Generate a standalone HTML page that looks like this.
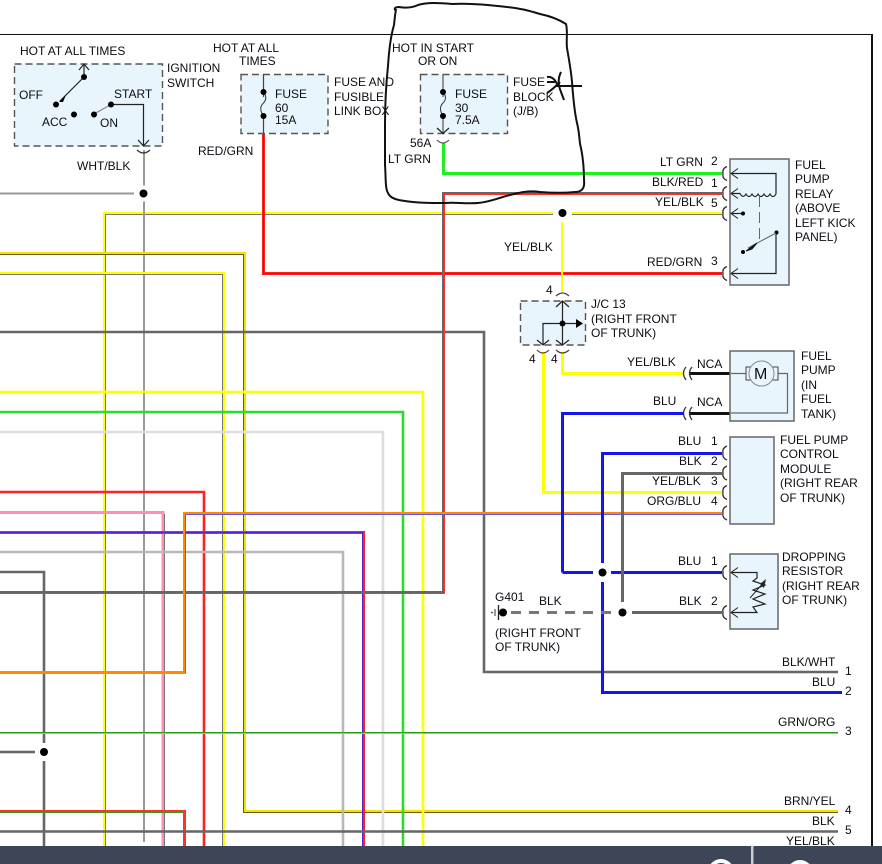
<!DOCTYPE html>
<html><head><meta charset="utf-8"><style>
html,body{margin:0;padding:0;background:#fff;width:882px;height:864px;overflow:hidden}
svg{display:block}
text{font-family:"Liberation Sans",sans-serif;font-size:12px;fill:#0c0c14}
.w{fill:none;stroke-linejoin:miter;shape-rendering:crispEdges}
.w .s{shape-rendering:auto;stroke-width:2.6}
.b{fill:#e9f5fc;stroke:#666;stroke-width:1.5}
.d{fill:#e9f5fc;stroke:#555;stroke-width:1.4;stroke-dasharray:7 4}
.k{fill:none;stroke:#222;stroke-width:1.2}
.g{fill:none;stroke:#666;stroke-width:1.2}
</style></head><body>
<svg width="882" height="864" viewBox="0 0 882 864" xmlns="http://www.w3.org/2000/svg">
<defs>
<path id="c" d="M727,-7Q722,-5 723,0Q722,5 727,7" fill="none" stroke="#333" stroke-width="1.3"/>
<path id="a" d="M738,-5L731,0L738,5" fill="none" stroke="#222" stroke-width="1"/>
</defs>
<rect width="882" height="864" fill="#fff"/>
<path d="M0,34.500H872" fill="none" stroke="#111" stroke-width="1"/>
<path d="M872,34V846" stroke="#111" stroke-width="2"/>

<!-- left wires -->
<g class="w" stroke-width="2">
<path d="M104,846V213H553M572,213H722" stroke="#ff0"/>
<path d="M105.500,846V214.500H553M572,214.500H722" stroke="#777" stroke-width="1"/>
<path d="M144,150V842M0,193.500H134" stroke="#999" stroke-width="2"/>
<path d="M0,253H245V811H838" stroke="#f2e200"/>
<path d="M0,254.500H243.500V812.500H838" stroke="#6f5a12" stroke-width="1"/>
<path d="M0,273H224V846" stroke="#ff0"/>
<path d="M0,274.500H222.500V846" stroke="#777" stroke-width="1"/>
<path d="M263.500,133V273.500H722" stroke="#ff2020" stroke-width="3"/>
<path d="M263.500,133V273.500H722" stroke="#0a7a0a" stroke-width="1"/>
<path class="s" d="M0,332H484V672H838" stroke="#666"/>
<path class="s" d="M0,392H423V846" stroke="#ff0"/>
<path class="s" d="M0,412H403V846" stroke="#2bdc2b"/>
<path class="s" d="M0,432H383V846" stroke="#ddd"/>
<path class="s" d="M0,492H204V846" stroke="#ff2020"/>
<path d="M0,512.500H163V846" stroke="#ff8fb0" stroke-width="3"/>
<path d="M164.500,514V846" stroke="#777" stroke-width="1"/>
<path d="M0,532.500H363.500V846" stroke="#ff2020" stroke-width="3"/>
<path d="M0,532.500H362.500V846" stroke="#5a20d0" stroke-width="1"/>
<path class="s" d="M0,552H343V846" stroke="#b8b8b8"/>
<path class="s" d="M0,572H44V743M44,761V846M0,752H35" stroke="#666"/>
<path d="M0,592H443V193H722" stroke="#666"/>
<path d="M0,593.500H444.500V194.500H722" stroke="#ff3030" stroke-width="1"/>
<path d="M0,672.500H184.500V513.500H722" stroke="#ff8a00" stroke-width="3"/>
<path d="M185.500,673V514.500H722" stroke="#5a5af0" stroke-width="1"/>
<path d="M0,733H838" stroke="#c9c320"/>
<path d="M0,732.500H838" stroke="#2a9a1a" stroke-width="1"/>
<path d="M0,811.500H184.500V846" stroke="#ff3030" stroke-width="3"/>
<path d="M0,812.500H183.500V846" stroke="#3a9a20" stroke-width="1"/>
<path class="s" d="M0,831.500H838" stroke="#666"/>
</g>
<!-- right wires -->
<g class="w" stroke-width="3">
<path d="M443.500,143V173.500H722" stroke="#1fee1f"/>
<path d="M562,222V292" stroke="#ff0" stroke-width="2"/>
<path d="M562.500,352V373.500H684" stroke="#ff0"/>
<path d="M543.500,352V492.500H722" stroke="#ff0"/>
<path d="M542.500,352V494.500" stroke="#ccc" stroke-width="0"/>
<path d="M562.500,572.500V413.500H684" stroke="#1414ee"/>
<path d="M562.500,572.500H593M611,572.500H722" stroke="#1414ee"/>
<path d="M602.500,563V453.500H722" stroke="#1414ee"/>
<path d="M602.500,582V692.500H842" stroke="#1414ee"/>
<path d="M622.500,602V473.500H722" stroke="#666"/>
<path d="M632,612.500H722" stroke="#666"/>
<path d="M511,612.500H613" stroke="#777" stroke-dasharray="10 8"/>
<path d="M690,373.500H730M690,413.500H730" stroke="#111"/>
</g>

<!-- dots with halo -->
<circle cx="143.500" cy="193.500" r="8" fill="#fff"/><circle cx="143.500" cy="193.500" r="4" fill="#000"/>
<circle cx="562.500" cy="213" r="9" fill="#fff"/><circle cx="562.500" cy="213" r="4" fill="#000"/>
<circle cx="602.500" cy="572.500" r="4" fill="#000"/>
<circle cx="622.500" cy="612.500" r="4" fill="#000"/>
<circle cx="44" cy="752" r="4" fill="#000"/>

<!-- ignition switch -->
<rect class="d" x="14.500" y="64" width="148" height="82"/>
<g class="k"><path d="M84,77V64M79,70L84,64L89,70"/><path d="M84,77L60,101"/><path d="M111,104.500H143.500V146M138,140L143.500,146L149,140"/><path d="M94,114L111,104.500" stroke="#888"/></g>
<circle cx="84" cy="77" r="3" fill="#000"/><circle cx="56" cy="104.500" r="3" fill="#000"/><path d="M59,102L66,95L63,102Z" fill="#000"/><circle cx="74" cy="114.500" r="3" fill="#000"/><circle cx="94" cy="114.500" r="3" fill="#000"/><circle cx="111" cy="104.500" r="3" fill="#000"/>
<path d="M137,150Q143.500,156 150,150" fill="none" stroke="#333" stroke-width="1.200"/>

<!-- fuse boxes -->
<rect class="d" x="241" y="74.500" width="87" height="59"/>
<path d="M263.500,74V133" stroke="#444" stroke-width="1.200"/>
<rect x="260" y="97" width="6" height="16" fill="#e9f5fc"/>
<path d="M263.500,92Q268,98 263.500,103Q258,108 263.500,116" fill="none" stroke="#333" stroke-width="1"/>
<circle cx="263.500" cy="92" r="3" fill="#000"/><circle cx="263.500" cy="116" r="3" fill="#000"/>

<rect class="d" x="420.500" y="74.500" width="87" height="59"/>
<path d="M443,74V133" stroke="#555" stroke-width="1.200"/>
<rect x="439" y="97" width="7" height="16" fill="#e9f5fc"/>
<path d="M443,92Q448,98 443,103Q438,108 443,116" fill="none" stroke="#333" stroke-width="1"/>
<circle cx="443" cy="92" r="3" fill="#000"/><circle cx="443" cy="116" r="3" fill="#000"/>
<path d="M437,128L443,133.500L449,128" class="k"/>
<path d="M437,140Q443,146 449,140" fill="none" stroke="#555" stroke-width="1.200"/>

<!-- relay -->
<rect class="b" x="730" y="159" width="59" height="126"/>
<g class="k">
<path d="M731,173.500H776V194"/>
<path d="M731,193.500H740Q743,199 746,194Q749,199 752,194Q755,199 758,194Q761,199 764,194Q767,199 770,194Q773,199 776,194"/>
<path d="M731,213.500H743"/>
<path d="M776,233V273.500H731"/>
</g>
<circle cx="743" cy="213.500" r="2" fill="#000"/>
<circle cx="776.500" cy="232.500" r="2" fill="#000"/><circle cx="743" cy="252" r="2" fill="#000"/>
<path d="M776,233L748,248" stroke="#666" stroke-width="1"/><path d="M746,251L757,243L752,249Z" fill="#111" stroke="#111"/>
<path d="M759.500,196V242" stroke="#666" stroke-width="1" stroke-dasharray="11 5"/>
<use href="#a" y="173.500"/><use href="#a" y="193.500"/><use href="#a" y="213.500"/><use href="#a" y="273.500"/>
<use href="#c" y="173.500"/><use href="#c" y="193.500"/><use href="#c" y="213.500"/><use href="#c" y="273.500"/>

<!-- J/C -->
<rect class="d" x="520.500" y="301" width="65" height="44"/>
<g class="k"><path d="M562.500,302V345M556,307L562.500,301L569,307"/><path d="M543,345V323.500H578"/><path d="M537,340L543,345L549,340M556,340L562.500,345L569,340"/></g>
<path d="M576,319L583,323.500L576,328Z" fill="#000"/><circle cx="562.500" cy="323.500" r="3" fill="#000"/>
<path d="M556,296Q562.500,290 569,296M537,350Q543,356 549,350M556,350Q562.500,356 569,350" fill="none" stroke="#444" stroke-width="1.200"/>

<!-- pump -->
<rect class="b" x="730" y="351" width="64" height="70"/>
<g class="g"><path d="M731,373.500H746M778,373.500H787.500V413H731"/></g>
<rect x="746" y="367" width="32" height="13" fill="#e9f5fc" stroke="#444"/>
<circle cx="761.500" cy="373.500" r="12.500" fill="#e9f5fc" stroke="#888"/>
<text x="754" y="379" style="font-size:16px">M</text>
<g fill="none" stroke="#333" stroke-width="1.300"><path d="M686,367Q681,373 686,380M692,367Q687,373 692,380M686,407Q681,413 686,420M692,407Q687,413 692,420"/></g>

<!-- module -->
<rect class="b" x="730" y="437" width="44" height="87"/>
<use href="#c" y="453"/><use href="#c" y="473"/><use href="#c" y="492.500"/><use href="#c" y="513"/>

<!-- resistor -->
<rect class="b" x="730" y="554" width="48" height="75"/>
<g class="k"><path d="M731,572.500H757V578L753,581L765,585L753,590L765,594L753,599L765,604L753,607L757,612.500H731"/></g>
<path d="M750,598L765,581" stroke="#222" stroke-width="1"/><path d="M766,579L764,588L760,584Z" fill="#222"/>
<use href="#a" y="572.500"/><use href="#a" y="612.500"/>
<use href="#c" y="572.500"/><use href="#c" y="612.500"/>

<!-- ground -->
<circle cx="503" cy="612.500" r="4" fill="#000"/>
<path d="M498.500,605V620" stroke="#222" stroke-width="1.300"/><path d="M495,609V616" stroke="#333" stroke-width="1"/><circle cx="492" cy="612.500" r="0.900" fill="#333"/>

<!-- text -->
<text x="20" y="55">HOT AT ALL TIMES</text>
<text x="167" y="72">IGNITION</text><text x="167" y="87">SWITCH</text>
<text x="19" y="99">OFF</text><text x="114" y="98">START</text><text x="42" y="126">ACC</text><text x="100" y="127">ON</text>
<text x="77" y="170">WHT/BLK</text>
<text x="213" y="52">HOT AT ALL</text><text x="239" y="65">TIMES</text>
<text x="275" y="98">FUSE</text><text x="275" y="112">60</text><text x="275" y="124">15A</text>
<text x="334" y="86">FUSE AND</text><text x="334" y="101">FUSIBLE</text><text x="334" y="115">LINK BOX</text>
<text x="198" y="155">RED/GRN</text>
<text x="392" y="52">HOT IN START</text><text x="418" y="65">OR ON</text>
<text x="455" y="98">FUSE</text><text x="455" y="112">30</text><text x="455" y="124">7.5A</text>
<text x="513" y="86">FUSE</text><text x="513" y="101">BLOCK</text><text x="513" y="115">(J/B)</text>
<text x="410" y="147">56A</text><text x="388" y="163">LT GRN</text>
<text x="660" y="166">LT GRN</text><text x="711" y="165">2</text>
<text x="652" y="186">BLK/RED</text><text x="711" y="187">1</text>
<text x="655" y="206">YEL/BLK</text><text x="711" y="207">5</text>
<text x="647" y="266">RED/GRN</text><text x="711" y="265">3</text>
<text x="504" y="251">YEL/BLK</text>
<text x="795" y="169">FUEL</text><text x="795" y="183">PUMP</text><text x="795" y="198">RELAY</text><text x="795" y="212">(ABOVE</text><text x="795" y="227">LEFT KICK</text><text x="795" y="241">PANEL)</text>
<text x="546" y="294">4</text>
<text x="591" y="308">J/C 13</text><text x="591" y="323">(RIGHT FRONT</text><text x="591" y="337">OF TRUNK)</text>
<text x="529" y="363">4</text><text x="551" y="363">4</text>
<text x="627" y="366">YEL/BLK</text><text x="697" y="368">NCA</text><text x="653" y="405">BLU</text><text x="697" y="406">NCA</text>
<text x="801" y="360">FUEL</text><text x="801" y="374">PUMP</text><text x="801" y="389">(IN</text><text x="801" y="403">FUEL</text><text x="801" y="418">TANK)</text>
<text x="678" y="445">BLU</text><text x="711" y="445">1</text>
<text x="679" y="465">BLK</text><text x="711" y="465">2</text>
<text x="652" y="485">YEL/BLK</text><text x="711" y="485">3</text>
<text x="647" y="505">ORG/BLU</text><text x="711" y="505">4</text>
<text x="780" y="444">FUEL PUMP</text><text x="780" y="458">CONTROL</text><text x="780" y="473">MODULE</text><text x="780" y="487">(RIGHT REAR</text><text x="780" y="502">OF TRUNK)</text>
<text x="678" y="565">BLU</text><text x="711" y="565">1</text>
<text x="495" y="601">G401</text><text x="539" y="605">BLK</text><text x="679" y="605">BLK</text><text x="711" y="605">2</text>
<text x="495" y="637">(RIGHT FRONT</text><text x="495" y="651">OF TRUNK)</text>
<text x="782" y="561">DROPPING</text><text x="782" y="575">RESISTOR</text><text x="782" y="590">(RIGHT REAR</text><text x="782" y="604">OF TRUNK)</text>
<text x="782" y="666">BLK/WHT</text><text x="845" y="675">1</text>
<text x="812" y="686">BLU</text><text x="845" y="695">2</text>
<text x="778" y="726">GRN/ORG</text><text x="845" y="735">3</text>
<text x="784" y="805">BRN/YEL</text><text x="845" y="814">4</text>
<text x="812" y="825">BLK</text><text x="845" y="834">5</text>
<text x="786" y="845">YEL/BLK</text><text x="845" y="855">6</text>
<text x="-8" y="650">N</text>

<!-- hand drawn -->
<path d="M395,10C394,8 396,7 399,7C405,8 412,8 418,5C428,2 440,3 453,4C470,3 490,5 507,7C520,8 530,11 540,14C550,16 558,19 566,24C568,32 566,40 567,48C569,60 571,70 572,82C573,95 574,110 577,123C580,135 579,142 581,148C583,158 584,170 584,180C585,188 582,192 575,192C565,193 553,193 540,192C528,190 518,193 510,195C498,198 490,202 478,203C465,204 455,202 445,203C430,203 418,203 405,201C396,200 390,198 388,193C385,188 386,178 385,165C385,150 385,135 385,125C385,105 386,85 388,66C389,50 391,35 394,25Q395,15 396,9" fill="none" stroke="#111" stroke-width="2"/>
<path d="M547,77C553,76 556,81 558,86M547,82H555M547,93C552,90 556,86 560,82M561,72C558,78 558,85 561,92L564,100M555,86H582" fill="none" stroke="#111" stroke-width="2"/>

<!-- footer -->
<rect x="0" y="846" width="882" height="18" fill="#3d4656"/>
<rect x="751" y="846" width="2.500" height="18" fill="#c9ccd1"/>
<circle cx="721" cy="872" r="13" fill="#fff"/><circle cx="721" cy="872" r="9" fill="#3d4656"/>
<circle cx="800" cy="873" r="13" fill="#fff"/>
</svg>
</body></html>
